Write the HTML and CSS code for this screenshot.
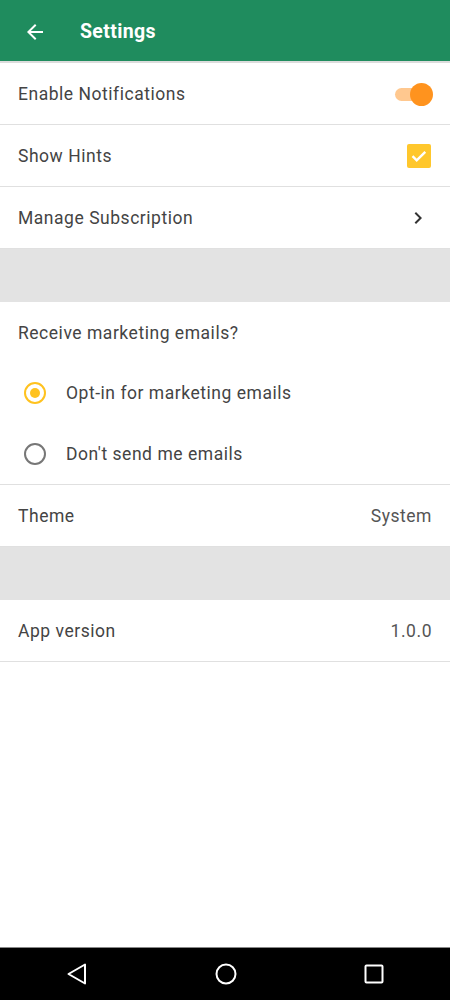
FILE: index.html
```html
<!DOCTYPE html>
<html>
<head>
<meta charset="utf-8">
<link rel="stylesheet" href="styles.css">
</head>
<body>
<div class="screen">
  <header class="appbar">
    <svg class="back" width="24" height="24" viewBox="0 0 24 24"><path d="M20 11H7.83l5.59-5.59L12 4l-8 8 8 8 1.41-1.41L7.83 13H20v-2z" fill="#fff"/></svg>
    <h1 class="title">Settings</h1>
  </header>
  <main class="content">
    <div class="row">
      <span class="label">Enable Notifications</span>
      <span class="switch"><span class="track"></span><span class="thumb"></span></span>
    </div>
    <div class="row">
      <span class="label">Show Hints</span>
      <span class="checkbox"><svg width="24" height="24" viewBox="0 0 24 24"><rect x="0" y="0" width="24" height="24" rx="2" fill="#FFC72C"/><path d="M5.5 12.2l4.2 4.2 8.6-8.6" stroke="#fff" stroke-width="2.4" fill="none"/></svg></span>
    </div>
    <div class="row">
      <span class="label">Manage Subscription</span>
      <svg class="chev" width="24" height="24" viewBox="0 0 24 24"><path d="M8.59 16.59L13.17 12 8.59 7.41 10 6l6 6-6 6-1.41-1.41z" fill="#333"/></svg>
    </div>
    <div class="spacer"></div>
    <div class="group">
      <div class="group-title">Receive marketing emails?</div>
      <div class="radio-row">
        <span class="radio on"></span>
        <span class="label">Opt-in for marketing emails</span>
      </div>
      <div class="radio-row">
        <span class="radio"></span>
        <span class="label">Don't send me emails</span>
      </div>
    </div>
    <div class="row">
      <span class="label">Theme</span>
      <span class="value">System</span>
    </div>
    <div class="spacer"></div>
    <div class="row">
      <span class="label">App version</span>
      <span class="value">1.0.0</span>
    </div>
  </main>
  <nav class="navbar">
    <svg width="24" height="24" viewBox="0 0 24 24"><path d="M20 2.5v19L3.5 12z" fill="none" stroke="#fff" stroke-width="2" stroke-linejoin="round"/></svg>
    <svg width="24" height="24" viewBox="0 0 24 24"><circle cx="12" cy="12" r="9.5" fill="none" stroke="#fff" stroke-width="2"/></svg>
    <svg width="24" height="24" viewBox="0 0 24 24"><rect x="3.5" y="3.5" width="17" height="17" rx="1" fill="none" stroke="#fff" stroke-width="2"/></svg>
  </nav>
</div>
</body>
</html>
```

FILE: styles.css
```css
* { box-sizing: border-box; }
html, body { margin: 0; padding: 0; }
body { font-family: Roboto, "Noto Sans", sans-serif; background: #fff; }
.screen { width: 450px; height: 1000px; display: flex; flex-direction: column; }
.appbar {
  height: 63px;
  background: #1F8C5E;
  border-bottom: 2px solid #dcdcdc;
  display: flex;
  align-items: center;
  padding: 2px 0 0 23px;
  flex-shrink: 0;
}
.back { display: block; }
.title {
  margin: 0 0 0 33px;
  color: #fff;
  font-size: 19.5px;
  font-weight: 700;
  letter-spacing: 0.35px;
}
.content { flex: 1; }
.row {
  height: 62px;
  display: flex;
  align-items: center;
  justify-content: space-between;
  padding: 0 18px;
  border-bottom: 1px solid #e0e0e0;
}
.label { font-size: 17.5px; color: #444; letter-spacing: 0.53px; }
.value { font-size: 17.5px; color: #555; letter-spacing: 0.53px; }
.switch { position: relative; width: 40px; height: 24px; margin-right: -1px; }
.track { position: absolute; left: 2px; top: 6px; width: 34px; height: 13px; border-radius: 7px; background: #FFC88F; }
.thumb { position: absolute; right: 0; top: 1px; width: 23px; height: 23px; border-radius: 50%; background: #FF931E; }
.checkbox { display: flex; margin-right: 1px; }
.checkbox svg { display: block; }
.chev { display: block; margin-right: 2px; }
.spacer { height: 53px; background: #e3e3e3; }
.group { border-bottom: 1px solid #e0e0e0; }
.group-title { font-size: 17.5px; color: #444; letter-spacing: 0.53px; padding: 21px 18px 0; height: 60px; }
.radio-row { height: 61px; display: flex; align-items: center; padding-left: 24px; }
.radio-row .label { margin-left: 20px; }
.radio {
  width: 22px; height: 22px; border-radius: 50%;
  border: 2px solid #777;
  display: flex; align-items: center; justify-content: center;
}
.radio.on { border-color: #FFC21F; }
.radio.on::after { content: ""; width: 10px; height: 10px; border-radius: 50%; background: #FFC21F; }
.navbar {
  height: 53px;
  background: #000;
  border-top: 1px solid #888;
  display: flex;
  align-items: center;
  justify-content: space-between;
  padding: 0 64px 0 65px;
  flex-shrink: 0;
}
.navbar svg { display: block; }
```
